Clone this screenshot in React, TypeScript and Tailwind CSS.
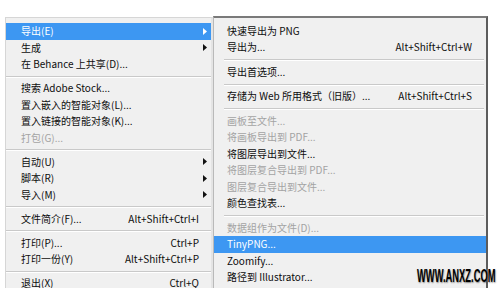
import React from 'react';

type Item =
  | { sep: true }
  | { sep?: false; label: string; shortcut?: string; arrow?: boolean; disabled?: boolean; active?: boolean };

const fileMenu: Item[] = [
  { label: '导出(E)', arrow: true, active: true },
  { label: '生成', arrow: true },
  { label: '在 Behance 上共享(D)...' },
  { sep: true },
  { label: '搜索 Adobe Stock...' },
  { label: '置入嵌入的智能对象(L)...' },
  { label: '置入链接的智能对象(K)...' },
  { label: '打包(G)...', disabled: true },
  { sep: true },
  { label: '自动(U)', arrow: true },
  { label: '脚本(R)', arrow: true },
  { label: '导入(M)', arrow: true },
  { sep: true },
  { label: '文件简介(F)...', shortcut: 'Alt+Shift+Ctrl+I' },
  { sep: true },
  { label: '打印(P)...', shortcut: 'Ctrl+P' },
  { label: '打印一份(Y)', shortcut: 'Alt+Shift+Ctrl+P' },
  { sep: true },
  { label: '退出(X)', shortcut: 'Ctrl+Q' },
];

const exportMenu: Item[] = [
  { label: '快速导出为 PNG' },
  { label: '导出为...', shortcut: 'Alt+Shift+Ctrl+W' },
  { sep: true },
  { label: '导出首选项...' },
  { sep: true },
  { label: '存储为 Web 所用格式（旧版）...', shortcut: 'Alt+Shift+Ctrl+S' },
  { sep: true },
  { label: '画板至文件...', disabled: true },
  { label: '将画板导出到 PDF...', disabled: true },
  { label: '将图层导出到文件...' },
  { label: '将图层复合导出到 PDF...', disabled: true },
  { label: '图层复合导出到文件...', disabled: true },
  { label: '颜色查找表...' },
  { sep: true },
  { label: '数据组作为文件(D)...', disabled: true },
  { label: 'TinyPNG...', active: true },
  { label: 'Zoomify...' },
  { label: '路径到 Illustrator...' },
];

const Arrow = ({ white }: { white?: boolean }) => (
  <svg width="4" height="7" viewBox="0 0 4 7" className="block">
    <path d="M0 0 L4 3.5 L0 7 Z" fill={white ? '#ffffff' : '#111111'} />
  </svg>
);

function rowColor(item: { disabled?: boolean; active?: boolean }) {
  if (item.active) return 'bg-[#3d97f2] text-white';
  if (item.disabled) return 'text-[#a3a3a3]';
  return 'text-[#0d0d0d]';
}

export default function App() {
  return (
    <div
      className="relative w-[500px] h-[288px] overflow-hidden bg-white flex items-start pt-[16px] text-[10px] leading-none"
      style={{ fontFamily: '"Noto Sans CJK SC", "Noto Sans", sans-serif' }}
    >
      {/* File menu */}
      <div className="ml-[5px] mt-px w-[208px] h-[290px] bg-[#f0f0f0] border-t border-l border-r-2 border-[#d6d6d6] border-r-[#e4e4e4] pt-[5px]">
        {fileMenu.map((item, i) =>
          item.sep ? (
            <div key={i} className="h-[7.5px] flex items-center">
              <div className="w-full h-px bg-[#c9c9c9] shadow-[0_1px_0_#ffffff]" />
            </div>
          ) : (
            <div key={i} className={`h-[16.5px] flex items-center pl-[15px] ${rowColor(item)}`}>
              <span className="flex-1 whitespace-nowrap">{item.label}</span>
              {item.shortcut && <span className="whitespace-nowrap">{item.shortcut}</span>}
              <span className="w-[12px] flex justify-center">
                {item.arrow && <Arrow white={item.active} />}
              </span>
            </div>
          )
        )}
      </div>

      {/* Export submenu */}
      <div className="w-[275px] h-[290px] bg-[#f0f0f0] border-t-2 border-t-[#7a7a7a] border-l border-l-[#b9b9b9] border-r-2 border-r-[#5c5c5c] pt-[4.5px]">
        {exportMenu.map((item, i) =>
          item.sep ? (
            <div key={i} className="h-2 flex items-center pl-[10px] pr-[2px]">
              <div className="w-full h-px bg-[#c9c9c9] shadow-[0_1px_0_#ffffff]" />
            </div>
          ) : (
            <div key={i} className={`h-[16.5px] flex items-center pl-[13px] pr-[14px] ${rowColor(item)}`}>
              <span className="flex-1 whitespace-nowrap">{item.label}</span>
              {item.shortcut && <span className="whitespace-nowrap">{item.shortcut}</span>}
            </div>
          )
        )}
      </div>

      {/* Watermark */}
      <div
        className="absolute left-[417px] top-[267px] text-[18px] font-bold text-black origin-left scale-x-[0.52] whitespace-nowrap [text-shadow:1px_1px_2px_rgba(0,0,0,0.45),0_0_2px_#ffffff]"
        style={{ fontFamily: '"Liberation Sans", Arial, sans-serif' }}
      >
        WWW.ANXZ.COM
      </div>
    </div>
  );
}
